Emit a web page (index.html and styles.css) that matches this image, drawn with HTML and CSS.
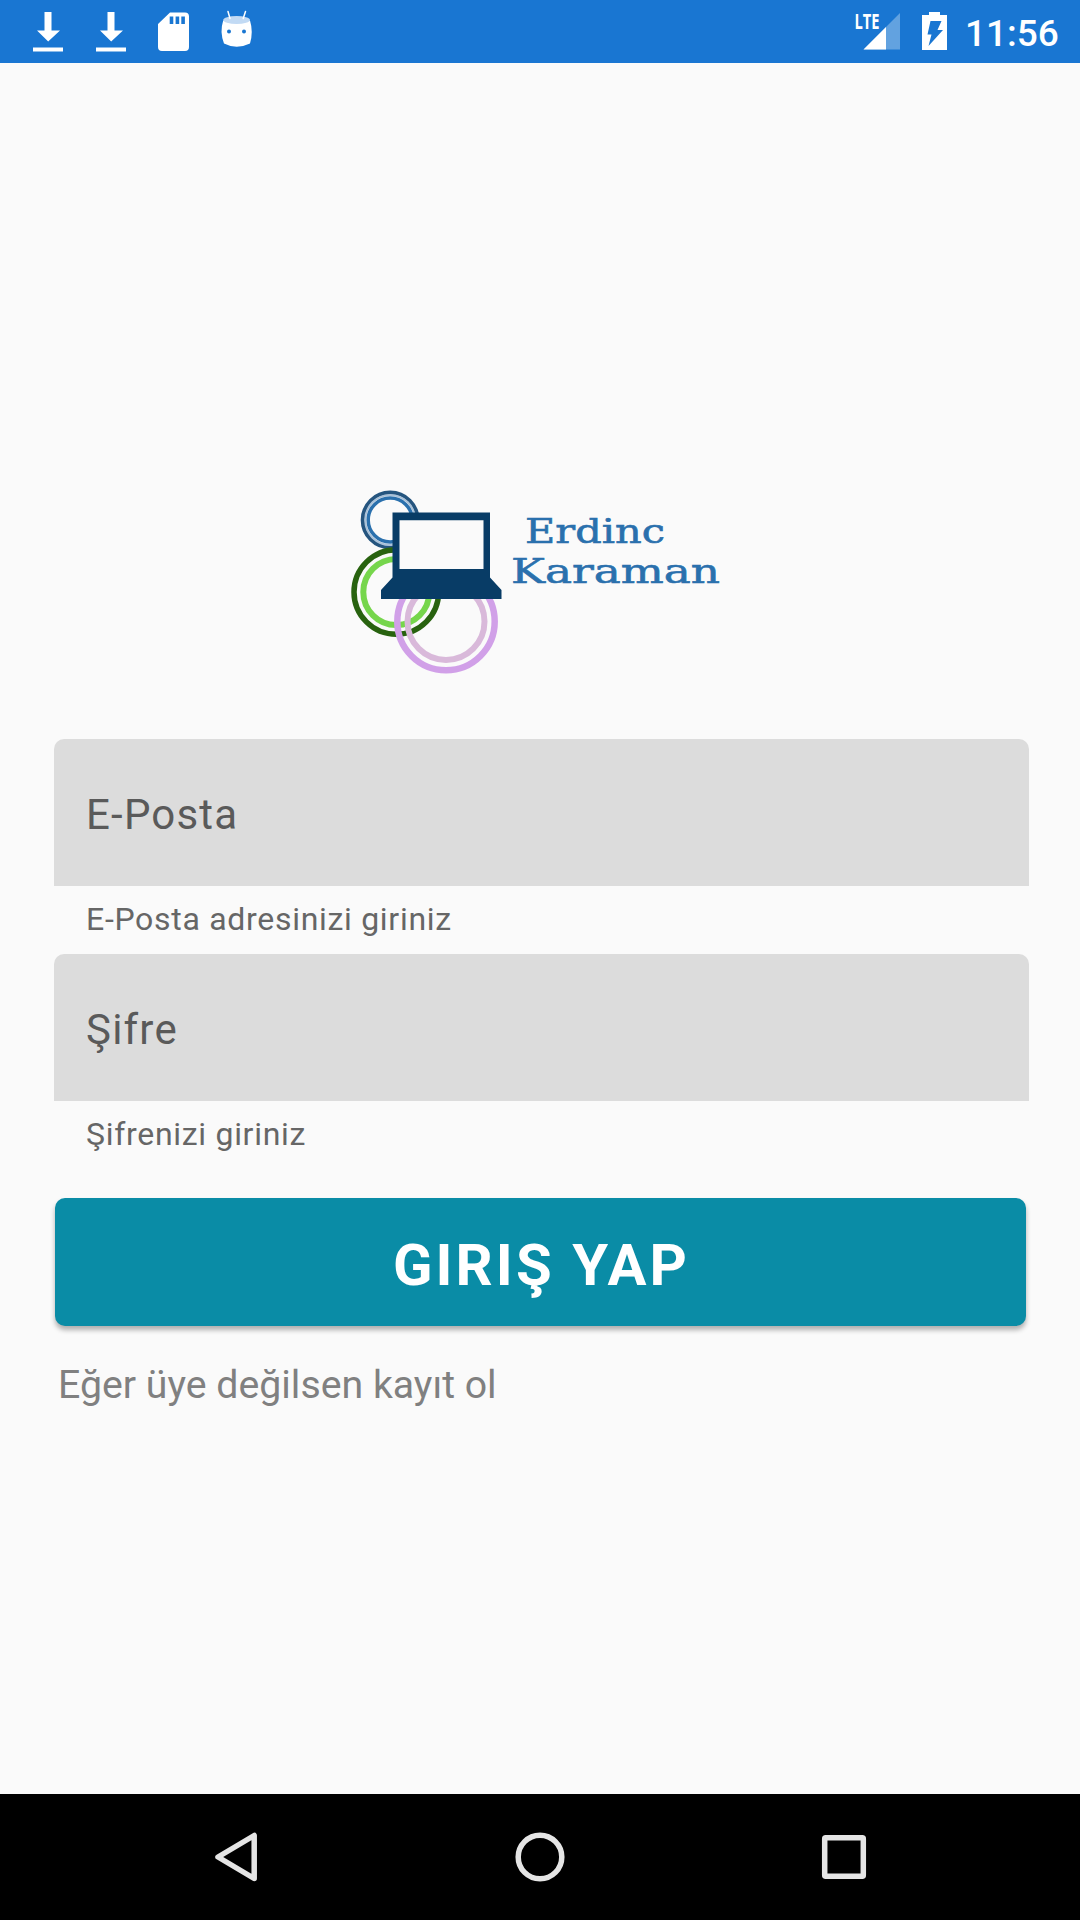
FILE: index.html
```html
<!DOCTYPE html>
<html lang="tr">
<head>
<meta charset="utf-8">
<title>Giriş</title>
<link rel="stylesheet" href="styles.css">
</head>
<body>
<div class="screen">
  <header class="status">
    <svg class="status-left" width="280" height="63" viewBox="0 0 280 63">
      <g fill="#fff">
        <path d="M44.500 12h7v18.500h8.500L48.200 41.500 37 30.500h7.500zM33 47.500h30v4H33z"/>
        <path d="M107.500 12h7v18.500h8.500L111.200 41.500 100 30.500h7.500zM96 47.500h30v4H96z"/>
        <path fill-rule="evenodd" d="M170 12.500h15a4 4 0 0 1 4 4V47a4 4 0 0 1-4 4h-23a4 4 0 0 1-4-4V24zM169.700 16.500V24h3.600v-7.500zM175.600 16.500V24h3.600v-7.500zM181.300 16.500V24h3.600v-7.500z"/>
        <path d="M223.200 20.500Q236.500 25 250 20.500Q253.500 32 250 43.500Q236.500 50 224 43.500Q219.500 32 223.200 20.500z"/>
      </g>
      <ellipse cx="236.600" cy="20" rx="13.400" ry="4" fill="#c2daf4"/>
      <path d="M228 11.500l2 7M245.500 11.500l-2.300 7" stroke="#fff" stroke-width="1.500" stroke-linecap="round"/>
      <g fill="#1976d2"><circle cx="229" cy="31.600" r="2"/><circle cx="244" cy="31.600" r="2"/></g>
    </svg>
    <svg class="status-right" width="130" height="63" viewBox="830 0 130 63">
      <path d="M900 13v36.500h-36.500z" fill="#fff" fill-opacity=".32"/>
      <path d="M886 27v22.500h-22.500z" fill="#fff"/>
      <text class="lte" x="854.500" y="29" textLength="25" lengthAdjust="spacingAndGlyphs">LTE</text>
      <path fill="#fff" d="M929 12h11v3h7v35h-25V15h7z"/>
      <path fill="#1976d2" d="M930.500 21h11l-4 9h5.500L928.500 46l3-11.500h-4z"/>
    </svg>
    <span class="clock">11:56</span>
  </header>

  <main class="content">
    <svg class="logo" width="390" height="200" viewBox="340 480 390 200">
      <g fill="none">
        <circle cx="390.200" cy="520" r="27.500" stroke="#25557f" stroke-width="4"/>
        <circle cx="390.200" cy="520" r="25" stroke="#a9c1d8" stroke-width="2"/>
        <circle cx="390.200" cy="520" r="22" stroke="#2a70ad" stroke-width="3.500"/>
        <circle cx="396.300" cy="592" r="42.300" stroke="#28620f" stroke-width="5.500"/>
        <circle cx="396.300" cy="592" r="33" stroke="#76d64c" stroke-width="6"/>
        <circle cx="446" cy="621.500" r="48.700" stroke="#d1a0e8" stroke-width="6.500"/>
        <circle cx="446" cy="621.500" r="38.500" stroke="#d9b9da" stroke-width="6"/>
      </g>
      <path d="M392.500 512.500h97.500v65l11.500 12.500v9H381v-9l11.500-12.500z" fill="#083c66"/>
      <path d="M399.500 520.300h84V569h-84z" fill="#fafafa"/>
      <text class="brand" x="525" y="542.500" textLength="140" lengthAdjust="spacingAndGlyphs">Erdinc</text>
      <text class="brand" x="511" y="582.500" textLength="209" lengthAdjust="spacingAndGlyphs">Karaman</text>
    </svg>
    <form class="form">
      <div class="field"><div class="box">E-Posta</div><div class="helper">E-Posta adresinizi giriniz</div></div>
      <div class="field"><div class="box">Şifre</div><div class="helper">Şifrenizi giriniz</div></div>
      <button class="submit" type="button">GIRIŞ YAP</button>
      <div class="register">Eğer üye değilsen kayıt ol</div>
    </form>
  </main>

  <nav class="nav">
    <svg width="1080" height="126" viewBox="0 1794 1080 126" fill="none" stroke="#e5e5e5" stroke-width="5.500" stroke-linejoin="round">
      <path d="M254.200 1835.500v43L218 1857z"/>
      <circle cx="540" cy="1857" r="21.800"/>
      <rect x="824.700" y="1837.700" width="38.600" height="38.600" rx="1"/>
    </svg>
  </nav>
</div>
</body>
</html>
```
FILE: styles.css
```css
* { box-sizing: border-box; }
body { margin: 0; font-family: Roboto, sans-serif; background: #fafafa; }
svg { display: block; }
.screen { width: 1080px; height: 1920px; display: flex; flex-direction: column; }
.status { height: 63px; background: #1976d2; display: flex; align-items: center; color: #fff; }
.status-right { margin-left: 550px; }
.clock { font-size: 37px; font-weight: 500; line-height: 43px; margin-left: 5px; padding-top: 4px; }
.lte { font: 700 22px "Open Sans", sans-serif; fill: #fff; }
.content { flex: 1; padding: 417px 51px 0 54px; }
.logo { margin-left: 286px; }
.brand { font: 34px "DejaVu Serif", serif; fill: #2a70ad; stroke: #2a70ad; stroke-width: .6px; }
.form { margin-top: 59px; }
.field { height: 215px; }
.box { height: 147px; border-radius: 10px 10px 0 0; background: #dcdcdc; padding: 51px 32px 0; font-size: 42px; line-height: 49px; letter-spacing: 1.2px; color: #5a5a5a; }
.helper { padding: 15px 32px 0; font-size: 32px; line-height: 37px; letter-spacing: .7px; color: #666; }
.submit { display: block; width: 971px; height: 128px; margin: 29px 0 0 1px; padding: 5px 0 0 2px; border: 0; border-radius: 10px; background: #0a8ca6; color: #fff; font: 700 58px/68px Roboto, sans-serif; letter-spacing: 3.1px; box-shadow: 0 4px 5px rgba(0,0,0,.3); }
.register { margin: 36px 0 0 4px; font-size: 39.25px; line-height: 46px; color: #808080; }
.nav { height: 126px; background: #000; }
```
